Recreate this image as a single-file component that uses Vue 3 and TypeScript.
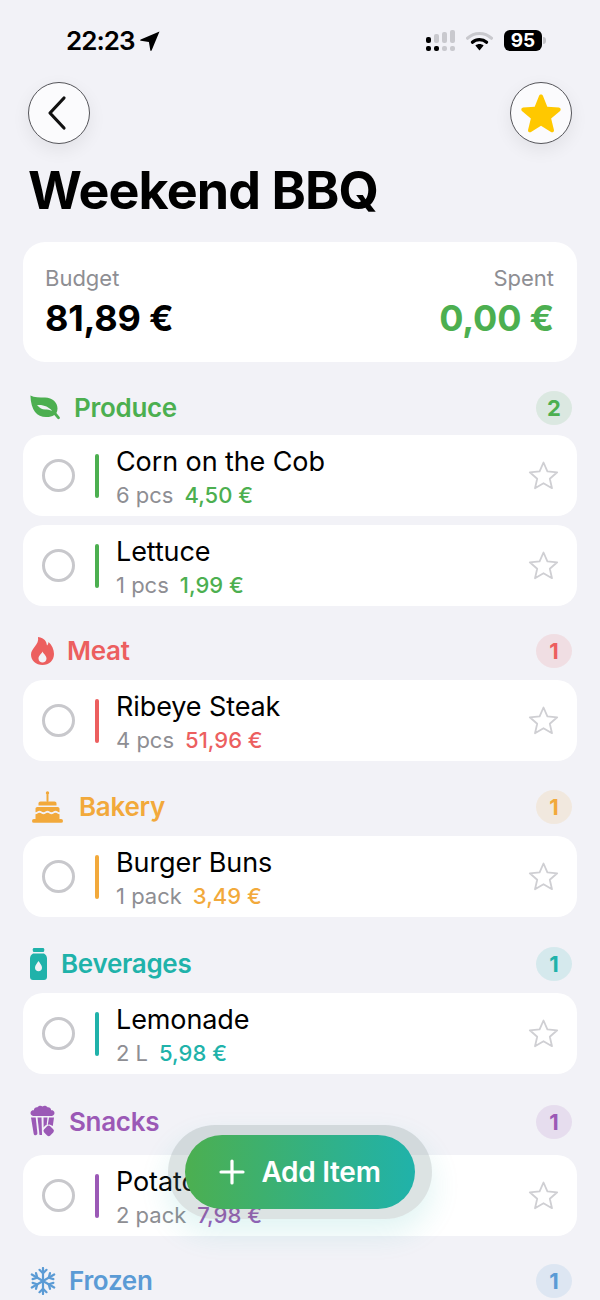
<script setup lang="ts">
interface Item {
  name: string
  qty: string
  price: string
}

interface Section {
  key: string
  title: string
  color: string
  iconW: number
  iconH: number
  gap: number
  top: number
  height: number
  items: Item[]
}

const sections: Section[] = [
  {
    key: 'leaf', title: 'Produce', color: '#4caf50', iconW: 30, iconH: 26, gap: 14, top: 27, height: 38,
    items: [
      { name: 'Corn on the Cob', qty: '6 pcs', price: '4,50 €' },
      { name: 'Lettuce', qty: '1 pcs', price: '1,99 €' }
    ]
  },
  {
    key: 'flame', title: 'Meat', color: '#ec5f5f', iconW: 24, iconH: 29, gap: 13, top: 24, height: 42,
    items: [{ name: 'Ribeye Steak', qty: '4 pcs', price: '51,96 €' }]
  },
  {
    key: 'cake', title: 'Bakery', color: '#f2a93b', iconW: 33, iconH: 32, gap: 16, top: 25, height: 42,
    items: [{ name: 'Burger Buns', qty: '1 pack', price: '3,49 €' }]
  },
  {
    key: 'bottle', title: 'Beverages', color: '#20b2aa', iconW: 17, iconH: 32, gap: 14, top: 26, height: 42,
    items: [{ name: 'Lemonade', qty: '2 L', price: '5,98 €' }]
  },
  {
    key: 'popcorn', title: 'Snacks', color: '#9b59b6', iconW: 25, iconH: 34, gap: 14, top: 23, height: 50,
    items: [{ name: 'Potato Chips', qty: '2 pack', price: '7,98 €' }]
  },
  {
    key: 'snow', title: 'Frozen', color: '#5b9bd5', iconW: 26, iconH: 28, gap: 13, top: 24, height: 42,
    items: []
  }
]

const signalCols = [
  { tall: 14, topOn: true, bottomOn: true },
  { tall: 17, topOn: false, bottomOn: true },
  { tall: 19, topOn: false, bottomOn: false },
  { tall: 21, topOn: false, bottomOn: false }
]

const tint = (hex: string) => `${hex}22`
</script>

<template>
  <div class="screen">
    <div class="status">
      <div class="clock">
        <span>22:23</span>
        <svg width="20" height="20" viewBox="0 0 20 20"><path d="M19.500.5 11.600 19.400c-.3.7-1.200.6-1.300-.1L8.900 11 .9 9.800c-.8-.1-.9-1-.2-1.300z" fill="#000" /></svg>
      </div>
      <div class="sys">
        <div class="signal">
          <div v-for="(col, i) in signalCols" :key="i" class="sig-col">
            <i class="sig-top" :class="{ on: col.topOn }" :style="{ height: `${col.tall - 8}px` }"></i>
            <i class="sig-dot" :class="{ on: col.bottomOn }"></i>
          </div>
        </div>
        <svg class="wifi" width="27" height="20" viewBox="0 0 27 20">
          <path d="M1.600 7.200C8.200.9 18.800.9 25.400 7.200" fill="none" stroke="#c9c9ce" stroke-width="3.200" stroke-linecap="round" />
          <path d="M6.400 11.200c3.900-3.500 10.300-3.500 14.200 0" fill="none" stroke="#000" stroke-width="3.200" stroke-linecap="round" />
          <path d="M9.400 14.400c2.300-2 5.900-2 8.200 0l-4.100 5z" fill="#000" />
        </svg>
        <div class="battery"><span>95</span></div>
        <i class="nub"></i>
      </div>
    </div>

    <div class="nav">
      <button class="round">
        <svg class="chevron" width="22" height="36" viewBox="0 0 22 36"><path d="M18 3 4 18l14 15" fill="none" stroke="#111" stroke-width="3.200" stroke-linecap="round" stroke-linejoin="round" /></svg>
      </button>
      <button class="round">
        <svg width="42" height="42" viewBox="0 0 24 24"><path d="M12 1.400c.5 0 .9.3 1.100.8l2.500 6.200 6.600.5c1 .1 1.400 1.300.7 2l-5.100 4.300 1.600 6.500c.2 1-.8 1.700-1.700 1.200L12 19.300l-5.700 3.600c-.9.500-1.900-.2-1.700-1.200l1.600-6.500-5.100-4.300c-.7-.7-.3-1.900.7-2l6.600-.5 2.500-6.200c.2-.5.6-.8 1.100-.8z" fill="#ffc800" /></svg>
      </button>
    </div>

    <h1 class="title">Weekend BBQ</h1>

    <div class="summary">
      <div>
        <div class="sum-label">Budget</div>
        <div class="sum-value">81,89 €</div>
      </div>
      <div class="sum-right">
        <div class="sum-label">Spent</div>
        <div class="sum-value spent">0,00 €</div>
      </div>
    </div>

    <section v-for="s in sections" :key="s.key" :style="{ color: s.color }">
      <div class="head" :style="{ marginTop: `${s.top}px`, height: `${s.height}px`, gap: `${s.gap}px` }">
        <svg :width="s.iconW" :height="s.iconH" :viewBox="`0 0 ${s.iconW} ${s.iconH}`" fill="currentColor">
          <template v-if="s.key === 'leaf'">
            <path d="M.4.4c4 2 9 2 14.600 2.100 7.500.1 12.500 5 12.500 11 0 1.700-.4 3.200-1.100 4.500l3.200 3.900c1.200 1.600-1 3.200-2.300 1.700l-3-3.600c-2.300 1.400-4.700 2-7.300 2C7.500 22.500 1 16 .4.400z" />
            <path d="M7 10c4-.3 7 .4 9.500 1.600 2.200 1.100 4 2.600 5.700 4.400-2.800-1.300-4.800-1.500-7.100-1.500-2.800 0-5.500-1.500-8.100-4.500z" fill="#f2f2f7" />
          </template>
          <template v-else-if="s.key === 'flame'">
            <path fill-rule="evenodd" transform="translate(1 0)" d="M7 0c7 1 8.500 5 9 8.500 1-1 1.500-2.500 1.500-3.500 3.500 3 5.500 7.500 5.500 12 0 6.500-5 11-11.500 11S0 23.500 0 17.500C0 11 8.500 8 7 0zm4.500 14.500c-1 2.500-4 4-4 7 0 2.500 2 4 4 4s4-1.500 4-4c0-3-3-4.500-4-7z" />
          </template>
          <template v-else-if="s.key === 'cake'">
            <g transform="translate(1.500 0)">
              <rect x="15" y="3" width="2" height="8" rx="1" />
              <circle cx="16" cy="2" r="1.700" />
              <path d="M9 10.500h14c1.200 0 2 .9 2 2v2H7v-2c0-1.100.8-2 2-2z" />
              <path d="M5.800 16h20.400c1 0 1.800.8 1.800 1.800v3.400c-1.700 0-2.300-1.400-4-1.400s-2.300 1.400-4 1.400-2.300-1.400-4-1.400-2.300 1.400-4 1.400-2.300-1.400-4-1.400-2.300 1.400-4 1.400v-3.400c0-1 .8-1.800 1.800-1.800z" />
              <path d="M4 23.200c1.700 0 2.300-1.400 4-1.400s2.300 1.400 4 1.400 2.300-1.400 4-1.400 2.300 1.400 4 1.400 2.300-1.400 4-1.400 2.300 1.400 4 1.400V28H4z" />
              <rect x=".5" y="28" width="31" height="3.800" rx="1.900" />
            </g>
          </template>
          <template v-else-if="s.key === 'bottle'">
            <rect x="2.800" y="0" width="11.400" height="4" rx="1.200" />
            <path fill-rule="evenodd" d="M3 5.500h11c1.800 1.300 3 2.600 3 5V29c0 1.700-1.300 3-3 3H3c-1.700 0-3-1.300-3-3V10.500c0-2.400 1.200-3.700 3-5zM8.500 13c-1.600 2.700-3.500 4.300-3.500 6.800 0 2 1.500 3.500 3.500 3.500s3.500-1.500 3.500-3.500c0-2.500-1.900-4.100-3.500-6.800z" />
          </template>
          <template v-else-if="s.key === 'popcorn'">
            <path d="M3 11C.8 10.500 0 8.500.8 6.800 1.300 5.600 2.600 5 3.800 5.300 4 3.300 5.600 2 7.500 2.300 8.500.8 10.800.3 12.500 1.500c1.700-1.200 4-.7 5 .8 1.900-.3 3.500 1 3.700 3 1.200-.3 2.500.3 3 1.500.8 1.700 0 3.700-2.200 4.200z" />
            <path d="M1 12.500h4.700l1.700 15.600c.1 1.300-.7 2.100-1.700 2.100-1 0-1.800-.5-2-1.500z" />
            <path d="M7.500 12.500h4l.5 17.500H9.500z" />
            <path d="M13.500 12.500h4L16.600 20c-1 .2-2.400 1.300-3 2.500z" />
            <path d="M19 12.500h5l-1.200 8.500-3.200-1.500-1.800.2z" />
            <rect x="14.400" y="21.600" width="8.600" height="8.600" rx="2.200" transform="rotate(45 18.700 25.900)" />
          </template>
          <template v-else-if="s.key === 'snow'">
            <g fill="none" stroke="currentColor" stroke-width="2.200" stroke-linecap="round" stroke-linejoin="round">
              <path d="M13 1v26M1.800 7.500l22.400 13M1.800 20.500l22.400-13" />
              <path d="m9.500 2.800 3.500 3.500 3.500-3.500M9.500 25.200l3.500-3.500 3.500 3.500" />
              <path d="m2.600 12.100 4.700-1.300L6 6.100M23.400 15.900l-4.700 1.300 1.300 4.700" />
              <path d="m2.600 15.900 4.700 1.300L6 21.900M23.400 12.100l-4.700-1.300L20 6.100" />
            </g>
          </template>
        </svg>
        <span class="head-title">{{ s.title }}</span>
        <span class="count" :style="{ background: tint(s.color) }">{{ s.items.length || 1 }}</span>
      </div>

      <div v-for="item in s.items" :key="item.name" class="row">
        <i class="check"></i>
        <i class="bar"></i>
        <div class="info">
          <div class="name">{{ item.name }}</div>
          <div class="meta">
            <span class="qty">{{ item.qty }}</span>
            <span class="price">{{ item.price }}</span>
          </div>
        </div>
        <svg class="fav" width="31" height="30" viewBox="0 0 31 30"><path d="M15.500 1.500 19.400 10.400 29.200 11.300 21.800 17.700 24 27.200 15.500 22.200 7 27.200 9.200 17.700 1.800 11.300 11.600 10.400z" fill="none" stroke="#cfcfd3" stroke-width="1.800" stroke-linejoin="round" /></svg>
      </div>
    </section>

    <div class="fab-halo">
      <button class="fab">
        <svg width="26" height="26" viewBox="0 0 26 26"><path d="M13 2v22M2 13h22" stroke="#fff" stroke-width="3.200" stroke-linecap="round" /></svg>
        <span>Add Item</span>
      </button>
    </div>
  </div>
</template>

<style scoped>
.screen {
  position: relative;
  height: 1300px;
  overflow: hidden;
  background: #f2f2f7;
  font-family: Inter, "Liberation Sans", sans-serif;
  color: #000;
}

.status {
  height: 82px;
  display: flex;
  justify-content: space-between;
  align-items: flex-start;
  padding: 27px 54px 0 66px;
  box-sizing: border-box;
}
.clock {
  display: flex;
  align-items: center;
  gap: 6px;
  font-size: 26px;
  line-height: 27px;
  font-weight: 600;
  letter-spacing: -1px;
}
.sys {
  display: flex;
  align-items: flex-start;
  margin-top: 3px;
}
.signal {
  display: flex;
  gap: 3px;
  align-items: flex-end;
  height: 21px;
}
.sig-col {
  display: flex;
  flex-direction: column;
  gap: 3px;
  width: 5px;
}
.sig-top,
.sig-dot {
  display: block;
  border-radius: 2px;
  background: #c9c9ce;
}
.sig-dot {
  height: 5px;
}
.sig-top.on,
.sig-dot.on {
  background: #000;
}
.wifi {
  margin: 1px 11px 0 11px;
}
.battery {
  width: 38px;
  height: 21px;
  border-radius: 6px;
  background: #000;
  color: #fff;
  font-size: 19px;
  font-weight: 700;
  line-height: 21px;
  text-align: center;
}
.nub {
  display: block;
  width: 3px;
  height: 7px;
  margin: 7px 0 0 1px;
  border-radius: 0 3px 3px 0;
  background: #c4c4c8;
}

.nav {
  display: flex;
  justify-content: space-between;
  padding: 0 28px;
}
.round {
  width: 62px;
  height: 62px;
  padding: 0;
  display: flex;
  align-items: center;
  justify-content: center;
  border: 1px solid #55555a;
  border-radius: 50%;
  background: #fbfbfd;
  box-shadow: 0 6px 18px rgba(0, 0, 0, 0.07);
}
.chevron {
  margin-right: 5px;
}

.title {
  margin: 0 0 6px;
  padding: 2px 0 0 28px;
  font-size: 52px;
  line-height: 90px;
  font-weight: 700;
  letter-spacing: -0.9px;
}

.summary {
  height: 120px;
  margin: 0 23px;
  padding: 22px 23px 0 22px;
  box-sizing: border-box;
  display: flex;
  justify-content: space-between;
  background: #fff;
  border-radius: 22px;
}
.sum-right {
  text-align: right;
}
.sum-label {
  font-size: 22px;
  line-height: 28px;
  color: #8e8e93;
}
.sum-value {
  margin-top: 4px;
  font-size: 36px;
  line-height: 44px;
  font-weight: 700;
  letter-spacing: -0.2px;
}
.spent {
  color: #4caf50;
}

.head {
  display: flex;
  align-items: center;
  margin-bottom: 8px;
  padding: 0 28px 0 30px;
}
.head-title {
  flex: 1;
  padding-bottom: 2px;
  font-size: 26px;
  font-weight: 600;
  letter-spacing: -0.3px;
}
.count {
  width: 36px;
  height: 34px;
  border-radius: 50%;
  font-size: 22px;
  line-height: 34px;
  font-weight: 700;
  text-align: center;
}

.row {
  height: 81px;
  margin: 0 23px 9px;
  padding: 0 18px 0 19px;
  box-sizing: border-box;
  display: flex;
  align-items: center;
  background: #fff;
  border-radius: 20px;
}
.row:last-child {
  margin-bottom: 0;
}
.check {
  display: block;
  width: 33px;
  height: 33px;
  box-sizing: border-box;
  border: 3px solid #c8c8cc;
  border-radius: 50%;
}
.bar {
  display: block;
  width: 4px;
  height: 44px;
  margin: 0 17px 0 20px;
  border-radius: 2px;
  background: currentColor;
}
.info {
  flex: 1;
  padding-top: 2px;
}
.name {
  font-size: 27px;
  line-height: 34px;
  color: #000;
  letter-spacing: -0.1px;
}
.meta {
  display: flex;
  gap: 11px;
  margin-top: 2px;
  font-size: 22px;
  line-height: 28px;
}
.qty {
  color: #8e8e93;
}
.price {
  font-weight: 500;
}

/* translucent plate the add button floats on */
.fab-halo {
  position: absolute;
  left: 168px;
  top: 1125px;
  padding: 10px 17px;
  border-radius: 47px;
  background: rgba(96, 128, 128, 0.22);
  box-shadow: 0 14px 30px rgba(32, 178, 170, 0.14);
}
.fab {
  width: 230px;
  height: 74px;
  display: flex;
  align-items: center;
  justify-content: center;
  gap: 16px;
  padding: 0;
  border: none;
  border-radius: 37px;
  background: linear-gradient(90deg, #4caf50, #20b2aa);
  color: #fff;
  font: 600 28px Inter, "Liberation Sans", sans-serif;
  letter-spacing: -0.3px;
}
</style>

<style>
body {
  background: #f2f2f7;
}
</style>
